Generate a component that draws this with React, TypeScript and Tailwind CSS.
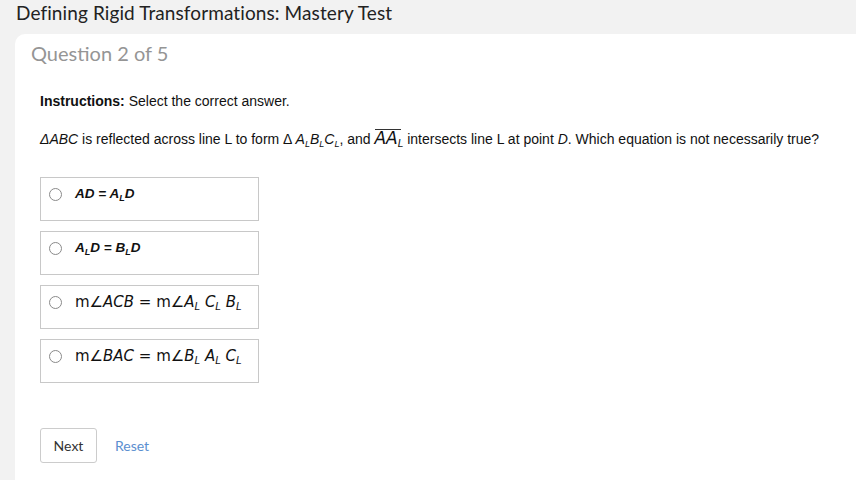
import React from "react";

function Radio() {
  return (
    <span className="inline-block w-[13px] h-[13px] rounded-full border border-[#8a8a8a] bg-white shrink-0" />
  );
}

function Opt({ children }: { children: React.ReactNode }) {
  return (
    <div className="w-[219px] h-[44px] border border-[#c8c8c8] bg-white flex items-start pt-[8px] pl-[8px]">
      <div className="flex items-center gap-[13px] h-[16px]">
        <Radio />
        {children}
      </div>
    </div>
  );
}

function S({ children, m }: { children: React.ReactNode; m?: boolean }) {
  return (
    <span className={m ? "text-[10px] relative top-[3px]" : "text-[9px] relative top-[3px]"}>{children}</span>
  );
}

const arial = { fontFamily: '"Liberation Sans", Arial, sans-serif' } as React.CSSProperties;

export default function App() {
  return (
    <div className="w-[856px] h-[480px] bg-[#f2f2f2] overflow-hidden flex flex-col">
      <div className="h-[34px] pl-[16px] pt-[1px] text-[19px] text-[#222] leading-[24px] font-['Lato',sans-serif] tracking-[0.1px]">
        Defining Rigid Transformations: Mastery Test
      </div>
      <div className="ml-[15px] flex-1 bg-white rounded-tl-[10px] flex flex-col">
        <div className="pl-[16px] pt-[6px] text-[20px] leading-[26px] text-[#959595] font-['Lato',sans-serif]">
          Question 2 of 5
        </div>
        <div className="pl-[25px] text-[14px] text-[#111] font-['Liberation_Sans',sans-serif]">
          <div className="mt-[26px] leading-[18px]">
            <b>Instructions:</b> Select the correct answer.
          </div>
          <div className="mt-[19px] leading-[18px] whitespace-nowrap">
            <i>Δ</i><i>ABC</i> is reflected across line L to form Δ <i>A<S>L</S>B<S>L</S>C<S>L</S></i>, and{" "}
            <span className="relative inline-block font-['DejaVu_Sans',sans-serif] text-[17px] leading-[18px] italic">
              <span className="absolute left-[1px] right-[2px] top-[0px] h-px bg-[#333]" />
              AA<S m>L</S>
            </span>{" "}
            intersects line L at point <i>D</i>. Which equation is not necessarily true?
          </div>
          <div className="mt-[27px] flex flex-col gap-[10px]">
            <Opt>
              <span className="font-bold italic text-[13.5px]" style={arial}>
                AD = A<S>L</S>D
              </span>
            </Opt>
            <Opt>
              <span className="font-bold italic text-[13.5px]" style={arial}>
                A<S>L</S>D = B<S>L</S>D
              </span>
            </Opt>
            <Opt>
              <span className="text-[15px] font-['DejaVu_Sans',sans-serif] text-[#111] whitespace-nowrap">
                m∠<i>ACB</i> = m∠<i>A<S m>L</S> C<S m>L</S> B<S m>L</S></i>
              </span>
            </Opt>
            <Opt>
              <span className="text-[15px] font-['DejaVu_Sans',sans-serif] text-[#111] whitespace-nowrap">
                m∠<i>BAC</i> = m∠<i>B<S m>L</S> A<S m>L</S> C<S m>L</S></i>
              </span>
            </Opt>
          </div>
          <div className="mt-[45px] flex items-center font-['Lato',sans-serif]">
            <button className="w-[57px] h-[35px] border border-[#cccccc] rounded-[3px] bg-white text-[14px] text-[#333]">
              Next
            </button>
            <span className="ml-[18px] text-[14px] text-[#5b8fd0]">Reset</span>
          </div>
        </div>
      </div>
    </div>
  );
}
